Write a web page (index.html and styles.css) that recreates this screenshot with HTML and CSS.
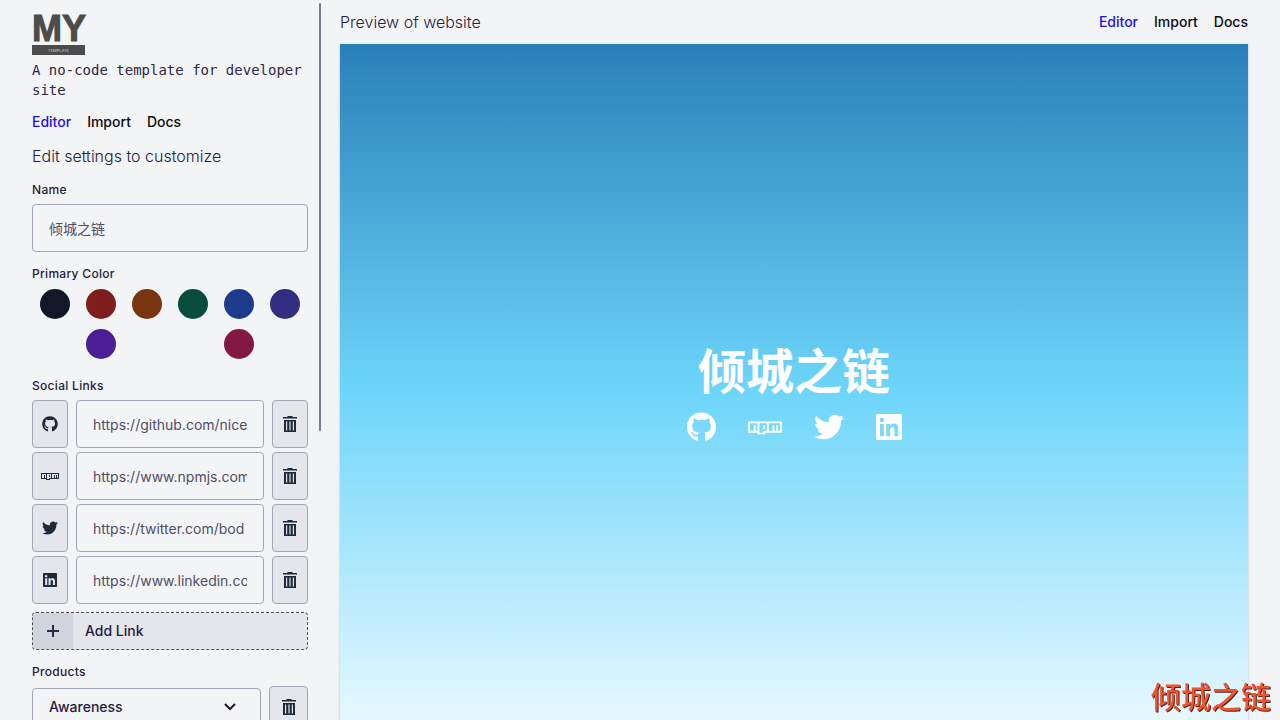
FILE: index.html
```
<!DOCTYPE html>
<html lang="en">
<head>
<meta charset="utf-8">
<meta name="viewport" content="width=device-width, initial-scale=1">
<title>My Template</title>
<link rel="stylesheet" href="styles.css">
</head>
<body>
<svg class="sprite" aria-hidden="true">
  <symbol id="github" viewBox="0 0 496 512"><path d="M244.800 8C106.100 8 0 113.300 0 252c0 110.900 69.800 205.800 169.500 239.200 12.800 2.300 17.300-5.600 17.300-12.100 0-6.200-.3-40.400-.3-61.400 0 0-70 15-84.700-29.800 0 0-11.400-29.100-27.800-36.600 0 0-22.900-15.700 1.600-15.400 0 0 24.900 2 38.600 25.800 21.900 38.600 58.600 27.500 72.900 20.900 2.300-16 8.800-27.100 16-33.700-55.900-6.200-112.300-14.300-112.300-110.500 0-27.500 7.600-41.300 23.600-58.900-2.600-6.500-11.100-33.300 2.600-67.900 20.900-6.500 69 27 69 27 20-5.600 41.500-8.500 62.800-8.500s42.800 2.900 62.800 8.500c0 0 48.100-33.600 69-27 13.700 34.700 5.200 61.400 2.600 67.900 16 17.700 25.800 31.500 25.800 58.900 0 96.500-58.900 104.200-114.800 110.500 9.200 7.900 17 22.900 17 46.400 0 33.700-.3 75.400-.3 83.600 0 6.500 4.600 14.400 17.300 12.100C428.200 457.800 496 362.900 496 252 496 113.300 383.500 8 244.800 8z"/></symbol>
  <symbol id="npm" viewBox="0 0 576 512"><path d="M288 288h-32v-64h32v64zm288-128v192H288v32H160v-32H0V160h576zm-416 32H32v128h64v-96h32v96h32V192zm160 0H192v160h64v-32h64V192zm224 0H352v128h64v-96h32v96h32v-96h32v96h32V192z"/></symbol>
  <symbol id="twitter" viewBox="0 0 512 512"><path d="M459.370 151.716c.325 4.548.325 9.097.325 13.645 0 138.720-105.583 298.558-298.558 298.558-59.452 0-114.680-17.219-161.137-47.106 8.447.974 16.568 1.299 25.340 1.299 49.055 0 94.213-16.568 130.274-44.832-46.132-.975-84.792-31.188-98.112-72.772 6.498.974 12.995 1.624 19.818 1.624 9.421 0 18.843-1.300 27.614-3.573-48.081-9.747-84.143-51.980-84.143-102.985v-1.299c13.969 7.797 30.214 12.670 47.431 13.319-28.264-18.843-46.781-51.005-46.781-87.391 0-19.492 5.197-37.360 14.294-52.954 51.655 63.675 129.300 105.258 216.365 109.807-1.624-7.797-2.599-15.918-2.599-24.040 0-57.828 46.782-104.934 104.934-104.934 30.213 0 57.502 12.670 76.670 33.137 23.715-4.548 46.456-13.320 66.599-25.340-7.798 24.366-24.366 44.833-46.132 57.827 21.117-2.273 41.584-8.122 60.426-16.243-14.292 20.791-32.161 39.308-52.628 54.253z"/></symbol>
  <symbol id="linkedin" viewBox="0 0 448 512"><path d="M416 32H31.900C14.300 32 0 46.500 0 64.300v383.400C0 465.500 14.300 480 31.900 480H416c17.600 0 32-14.500 32-32.300V64.300c0-17.800-14.400-32.300-32-32.300zM135.400 416H69V202.200h66.500V416zm-33.200-243c-21.300 0-38.500-17.300-38.500-38.500S80.900 96 102.200 96c21.200 0 38.500 17.300 38.500 38.500 0 21.300-17.200 38.500-38.500 38.500zm282.100 243h-66.400V312c0-24.800-.5-56.700-34.500-56.700-34.600 0-39.900 27-39.900 54.900V416h-66.400V202.200h63.700v29.200h.9c8.900-16.800 30.600-34.500 62.900-34.500 67.200 0 79.700 44.300 79.700 101.900V416z"/></symbol>
  <symbol id="trash" viewBox="0 0 16 16"><path fill-rule="evenodd" d="M5.500 0h5v1H15v1.500H1V1h4.500zM2 4h12v12H2zM4 5.500v9h1.200v-9zM7.400 5.500v9h1.200v-9zM10.800 5.500v9H12v-9z"/></symbol>
</svg>
<div class="app">
  <aside class="sidebar">
    <div class="sidebar-body">
      <div class="logo">
        <div class="logo-name">MY</div>
        <div class="logo-bar"><svg viewBox="0 0 53 10"><text x="26.500" y="6.500" text-anchor="middle">TEMPLATE</text></svg></div>
      </div>
      <p class="tagline">A no-code template for developer site</p>
      <nav class="nav"><a class="active" href="#editor">Editor</a><a href="#import">Import</a><a href="#docs">Docs</a></nav>
      <h2 class="title">Edit settings to customize</h2>

      <form class="settings">
        <div class="field">
          <label class="label" for="name">Name</label>
          <input class="input" id="name" type="text" value="倾城之链">
        </div>
        <div class="field">
          <div class="label" id="color-label">Primary Color</div>
          <div class="swatches" role="group" aria-labelledby="color-label">
            <button type="button" class="swatch gray" aria-label="Gray"></button>
            <button type="button" class="swatch red" aria-label="Red"></button>
            <button type="button" class="swatch orange" aria-label="Orange"></button>
            <button type="button" class="swatch green" aria-label="Green"></button>
            <button type="button" class="swatch blue" aria-label="Blue"></button>
            <button type="button" class="swatch indigo" aria-label="Indigo"></button>
            <button type="button" class="swatch purple" aria-label="Purple"></button>
            <button type="button" class="swatch pink" aria-label="Pink"></button>
          </div>
        </div>
        <div class="field">
          <div class="label">Social Links</div>
          <div class="links">
            <div class="link-row">
              <button type="button" class="tile" aria-label="GitHub"><svg class="icon"><use href="#github"/></svg></button>
              <input class="input" type="text" aria-label="GitHub link" value="https://github.com/nice">
              <button type="button" class="tile" aria-label="Remove GitHub"><svg class="icon"><use href="#trash"/></svg></button>
            </div>
            <div class="link-row">
              <button type="button" class="tile" aria-label="npm"><svg class="icon wide"><use href="#npm"/></svg></button>
              <input class="input" type="text" aria-label="npm link" value="https://www.npmjs.com">
              <button type="button" class="tile" aria-label="Remove npm"><svg class="icon"><use href="#trash"/></svg></button>
            </div>
            <div class="link-row">
              <button type="button" class="tile" aria-label="Twitter"><svg class="icon"><use href="#twitter"/></svg></button>
              <input class="input" type="text" aria-label="Twitter link" value="https://twitter.com/bod">
              <button type="button" class="tile" aria-label="Remove Twitter"><svg class="icon"><use href="#trash"/></svg></button>
            </div>
            <div class="link-row">
              <button type="button" class="tile" aria-label="LinkedIn"><svg class="icon"><use href="#linkedin"/></svg></button>
              <input class="input" type="text" aria-label="LinkedIn link" value="https://www.linkedin.co">
              <button type="button" class="tile" aria-label="Remove LinkedIn"><svg class="icon"><use href="#trash"/></svg></button>
            </div>
          </div>
          <button type="button" class="add">
            <span class="add-icon"><svg viewBox="0 0 12 12"><path d="M6 0v12M0 6h12"/></svg></span>
            <span class="add-text">Add Link</span>
          </button>
        </div>
        <div class="field">
          <label class="label" for="product">Products</label>
          <div class="product-row">
            <div class="select-wrap">
              <select class="select" id="product"><option>Awareness</option></select>
              <svg class="chevron" viewBox="0 0 12 8"><path d="M1 1l5 5 5-5"/></svg>
            </div>
            <button type="button" class="tile product-remove" aria-label="Remove product"><svg class="icon"><use href="#trash"/></svg></button>
          </div>
        </div>
      </form>
    </div>
    <div class="thumb"></div>
  </aside>

  <main class="main">
    <header class="topbar">
      <h1 class="title">Preview of website</h1>
      <nav class="nav"><a class="active" href="#editor">Editor</a><a href="#import">Import</a><a href="#docs">Docs</a></nav>
    </header>
    <section class="preview">
      <h2 class="hero">倾城之链</h2>
      <div class="social">
        <a href="#github-link" aria-label="GitHub"><svg class="s-github"><use href="#github"/></svg></a>
        <a href="#npm-link" aria-label="npm"><svg class="s-npm"><use href="#npm"/></svg></a>
        <a href="#twitter-link" aria-label="Twitter"><svg class="s-twitter"><use href="#twitter"/></svg></a>
        <a href="#linkedin-link" aria-label="LinkedIn"><svg class="s-linkedin"><use href="#linkedin"/></svg></a>
      </div>
    </section>
  </main>
</div>
<div class="watermark">倾城之链</div>
</body>
</html>
```

FILE: styles.css
```
* { box-sizing: border-box; }

body {
  margin: 0;
  background: #f3f4f6;
  color: #252040;
  font: 14px/20px Inter, "Noto Sans CJK SC", sans-serif;
}

h1, h2, p { margin: 0; }
button, input, select { font: inherit; color: inherit; }
button { padding: 0; cursor: pointer; }
a { text-decoration: none; }
svg { display: block; fill: currentColor; }
.sprite { display: none; }

.app { display: flex; height: 100vh; overflow: hidden; }

.sidebar { position: relative; flex: 0 0 25%; min-width: 0; }
.sidebar-body { height: 100%; overflow: hidden; padding: 16px 12px 0 32px; }
.thumb {
  position: absolute;
  top: 3px;
  right: -1px;
  width: 2px;
  height: 428px;
  border-radius: 2px;
  background: #777c8b;
}

.logo { width: 55px; height: 40px; margin-bottom: 4px; color: #4c4c4c; }
.logo-name { height: 29px; font: 700 36px/26px "Liberation Sans", Arial, sans-serif; -webkit-text-stroke: 1px #4c4c4c; }
.logo-bar { width: 53px; height: 10px; background: #4c4c4c; }
.logo-bar text { fill: #d0d0d0; font: 4px Inter, sans-serif; }

.tagline { color: #2d2844; font-family: "DejaVu Sans Mono", monospace; }

.nav { display: flex; gap: 16px; font-weight: 500; }
.nav a { color: #0b0b12; }
.nav .active { color: #1d12e8; }
.sidebar .nav { margin-top: 12px; }

.title { font-size: 16px; line-height: 24px; font-weight: 300; }
.sidebar .title { margin-top: 12px; }

.settings { display: flex; flex-direction: column; gap: 12px; margin-top: 12px; }
.label { display: block; font-size: 12px; line-height: 20px; font-weight: 500; letter-spacing: 0.025em; }

.input {
  display: block;
  width: 100%;
  min-width: 0;
  height: 48px;
  padding: 0 16px;
  border: 1px solid #a3a5b5;
  border-radius: 4px;
  background: transparent;
  color: #504e66;
  font-weight: 400;
  outline: 0;
}
.field > .input, .links, .product-row { margin-top: 4px; }

.swatches { display: flex; flex-wrap: wrap; justify-content: space-around; }
.swatch { width: 30px; height: 30px; margin: 5px; border: 0; border-radius: 50%; }
.gray { background: #111827; }
.red { background: #7f1d1d; }
.orange { background: #78350f; }
.green { background: #064e3b; }
.blue { background: #1e3a8a; }
.indigo { background: #312e81; }
.purple { background: #4c1d95; }
.pink { background: #831843; }

.links { display: grid; gap: 4px; }
.link-row { display: grid; grid-template-columns: 36px 1fr 36px; gap: 8px; }
.tile {
  display: flex;
  align-items: center;
  justify-content: center;
  border: 1px solid #a3a5b5;
  border-radius: 4px;
  background: #e5e6eb;
  color: #1f2937;
}
.icon { width: 16px; height: 16px; }
.icon.wide { width: 18px; }

.add {
  display: flex;
  width: 100%;
  height: 38px;
  margin-top: 8px;
  border: 1px dashed #4b5563;
  border-radius: 4px;
  background: #e5e6eb;
  overflow: hidden;
  font-weight: 500;
}
.add-icon { display: grid; place-items: center; width: 40px; height: 100%; background: #d1d4dc; }
.add-icon svg { width: 12px; height: 12px; stroke: #32264a; stroke-width: 2; }
.add-text { align-self: center; margin-left: 12px; }

.product-row { display: grid; grid-template-columns: 1fr 39px; gap: 8px; align-items: center; }
.select-wrap { position: relative; }
.select {
  display: block;
  width: 100%;
  height: 38px;
  padding: 0 16px;
  border: 1px solid #a3a5b5;
  border-radius: 4px;
  background: transparent;
  appearance: none;
  font-weight: 500;
}
.chevron {
  position: absolute;
  top: 15px;
  right: 25px;
  width: 12px;
  height: 8px;
  fill: none;
  stroke: #20183a;
  stroke-width: 2;
  pointer-events: none;
}
.product-remove { height: 42px; }

.main { flex: 1; min-width: 0; padding: 0 32px 0 20px; }
.topbar { display: flex; align-items: center; justify-content: space-between; height: 44px; }
.preview {
  display: flex;
  flex-direction: column;
  align-items: center;
  justify-content: center;
  height: calc(100vh - 26px);
  background: linear-gradient(#2980b9, #6dd5fa, #edfaff);
  box-shadow: 0 1px 3px rgba(0, 0, 0, 0.2);
  color: #fff;
}
.hero { font-size: 48px; line-height: 64px; font-weight: 700; }
.social { display: flex; align-items: center; gap: 32px; margin-top: 8px; }
.social a { color: inherit; }
.social svg { height: 30px; }
.s-github { width: 29px; }
.s-npm { width: 34px; }
.s-twitter { width: 30px; }
.s-linkedin { width: 26px; }

.watermark {
  position: fixed;
  right: 9px;
  bottom: 4px;
  color: #f0532d;
  font-size: 30px;
  line-height: 38px;
  font-weight: 500;
  text-shadow: 1px 1px 0 #4b2a20;
}
```
